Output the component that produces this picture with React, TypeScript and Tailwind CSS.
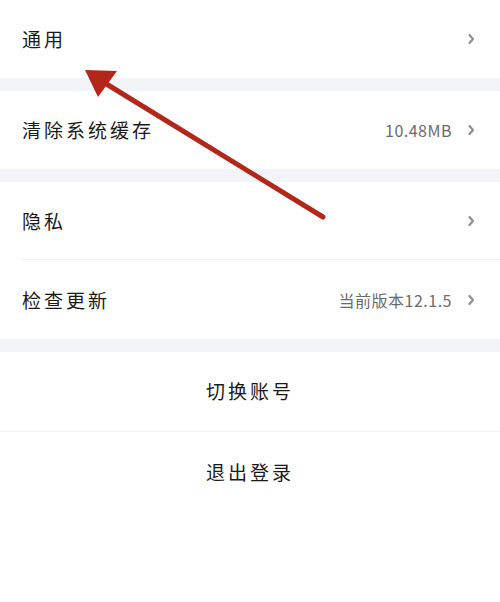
import React from 'react';

const font = { fontFamily: '"Noto Sans CJK SC", "Noto Sans", sans-serif' };

function Chevron() {
  return (
    <svg width="8" height="12" viewBox="0 0 8 12" className="ml-[15px]">
      <path d="M2.5 2 L6 6 L2.5 10" fill="none" stroke="#8f8f8f" strokeWidth="2.2" strokeLinecap="round" strokeLinejoin="round" />
    </svg>
  );
}

function Row({ label, value, divider }: { label: string; value?: string; divider?: boolean }) {
  return (
    <div className="relative flex h-[78px] items-center bg-white pl-[22px] pr-[25px]">
      <span className="flex-1 text-[19px] tracking-[3px] text-[#1a1a1a]">{label}</span>
      {value && <span className="text-[16px] tracking-[0.5px] text-[#6b6b6b]">{value}</span>}
      <Chevron />
      {divider && <div className="absolute bottom-0 left-[20px] right-0 h-px bg-[#f0f0f0]" />}
    </div>
  );
}

function Gap() {
  return <div className="h-[13px] bg-[#f3f4f8]" />;
}

export default function App() {
  return (
    <div className="relative h-[602px] w-[500px] overflow-hidden bg-white" style={font}>
      <Row label="通用" />
      <Gap />
      <Row label="清除系统缓存" value="10.48MB" />
      <Gap />
      <Row label="隐私" divider />
      <div className="h-px" />
      <Row label="检查更新" value="当前版本12.1.5" />
      <Gap />
      <div className="flex h-[80px] items-center justify-center border-b border-[#f0f0f0] text-[19px] tracking-[3px] text-[#1a1a1a]">
        切换账号
      </div>
      <div className="flex h-[80px] items-center justify-center text-[19px] tracking-[3px] text-[#1a1a1a]">
        退出登录
      </div>

      <svg className="pointer-events-none absolute left-0 top-0" width="500" height="602">
        <line x1="323" y1="217" x2="100" y2="80" stroke="#b3261a" strokeWidth="5" strokeLinecap="round" />
        <polygon points="85,70 117,71 98,97" fill="#b3261a" />
      </svg>
    </div>
  );
}
